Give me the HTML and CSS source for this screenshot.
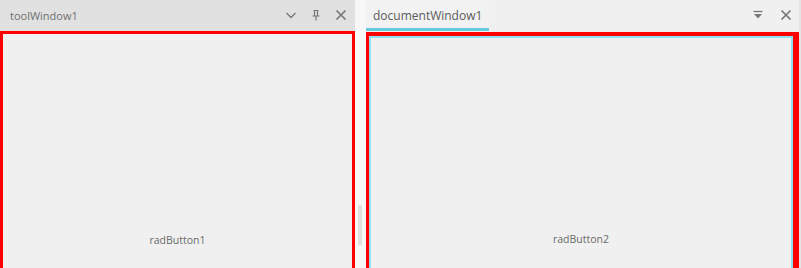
FILE: index.html
```html
<!DOCTYPE html>
<html lang="en">
<head>
    <meta charset="UTF-8">
    <title>Docking windows</title>
    <link rel="stylesheet" href="styles.css">
</head>
<body>
    <!-- Tool window -->
    <div class="tool-window">
        <div class="tool-header">
            <span class="tool-title">toolWindow1</span>
            <div class="tool-buttons">
                <svg width="12" height="12" viewBox="0 0 12 12"><path d="M1.5 4 L6 8.5 L10.5 4" fill="none" stroke="#777" stroke-width="1.3"/></svg>
                <svg width="12" height="12" viewBox="0 0 12 12"><path d="M3.5 1.5 H8.5 M4.5 1.5 V7 M7.5 1.5 V7 M2.5 7 H9.5 M6 7 V11.5" fill="none" stroke="#777" stroke-width="1.2"/></svg>
                <svg width="12" height="12" viewBox="0 0 12 12"><path d="M1.5 1.5 L10.5 10.5 M10.5 1.5 L1.5 10.5" fill="none" stroke="#777" stroke-width="1.7"/></svg>
            </div>
        </div>
        <div class="tool-body">
            <div class="rad-button">radButton1</div>
        </div>
    </div>

    <!-- Splitter -->
    <div class="splitter">
        <div class="grip"></div>
    </div>

    <!-- Document window -->
    <div class="doc-window">
        <div class="doc-header">
            <div class="doc-tab">documentWindow1</div>
            <div class="doc-buttons">
                <svg width="12" height="12" viewBox="0 0 12 12"><path d="M1.5 2.5 H10.5" stroke="#777" stroke-width="1.3"/><path d="M2 5 H10 L6 9.5 Z" fill="#777"/></svg>
                <svg width="12" height="12" viewBox="0 0 12 12"><path d="M1.5 1.5 L10.5 10.5 M10.5 1.5 L1.5 10.5" fill="none" stroke="#777" stroke-width="1.7"/></svg>
            </div>
        </div>
        <div class="doc-body">
            <div class="doc-inner">
                <div class="rad-button">radButton2</div>
            </div>
        </div>
    </div>
</body>
</html>
```

FILE: styles.css
```css
/* Page */
body {
    margin: 0;
    height: 268px;
    overflow: hidden;
    display: flex;
    font-family: 'Open Sans', 'Noto Sans', sans-serif;
    background-color: #f0f0f0;
    color: #666;
}

/* Tool window */
.tool-window {
    width: 355px;
    display: flex;
    flex-direction: column;
}

.tool-header {
    height: 31px;
    flex-shrink: 0;
    background-color: #e1e1e1;
    display: flex;
    align-items: center;
    justify-content: space-between;
    padding: 0 8px 0 10px;
    box-sizing: border-box;
}

.tool-title {
    font-size: 11px;
    color: #707070;
}

.tool-buttons {
    display: flex;
    gap: 13px;
    margin-top: -2px;
}

.tool-body {
    flex: 1;
    border: 3px solid #ff0000;
    border-bottom: none;
    background-color: #f0f0f0;
    padding-top: 199px;
}

/* Buttons in the windows */
.rad-button {
    text-align: center;
    font-size: 10.5px;
    line-height: 15px;
    color: #6a6a6a;
}

/* Splitter */
.splitter {
    width: 11px;
    background-color: #f7f7f7;
    display: flex;
    align-items: flex-end;
    padding: 0 0 23px 3px;
    box-sizing: border-box;
}

.grip {
    width: 4px;
    height: 40px;
    background-color: #e0e0e0;
}

/* Document window */
.doc-window {
    flex: 1;
    display: flex;
    flex-direction: column;
    border-right: 2px solid #e4e4e4;
}

.doc-header {
    height: 32px;
    flex-shrink: 0;
    display: flex;
    align-items: flex-start;
    justify-content: space-between;
    background-color: #f0f0f0;
}

.doc-tab {
    width: 123px;
    height: 31px;
    box-sizing: border-box;
    padding: 7px 0 0 7px;
    font-size: 12px;
    color: #5a5a5a;
    background-color: #f2f2f2;
    border-bottom: 3px solid #66c9dc;
}

.doc-buttons {
    display: flex;
    gap: 16px;
    padding: 9px 7px 0 0;
}

.doc-body {
    flex: 1;
    border: 3px solid #ff0000;
    border-top-width: 4px;
    border-right-width: 6px;
    border-bottom: none;
}

.doc-inner {
    height: 100%;
    border: 2px solid #8fe0f2;
    border-bottom: none;
    box-sizing: border-box;
    padding-top: 194px;
}
```
